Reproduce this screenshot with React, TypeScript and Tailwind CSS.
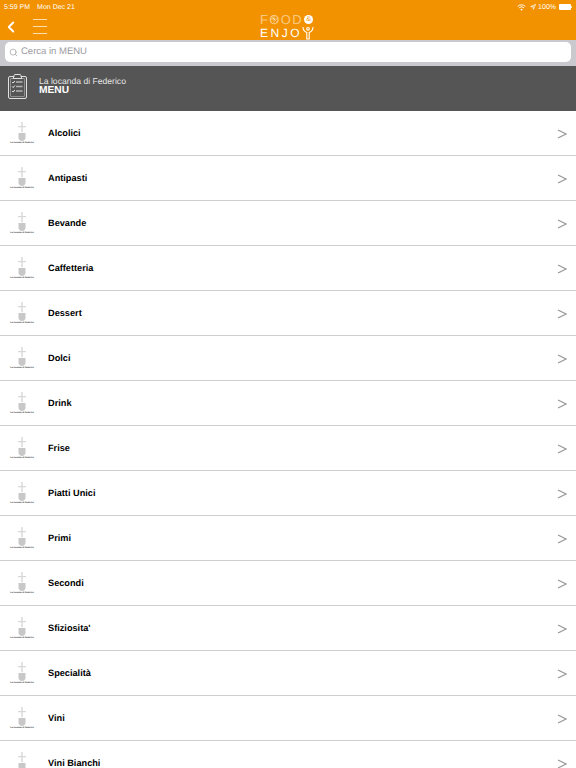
import { ChevronLeft, Search } from 'lucide-react';

const categories = [
  'Alcolici',
  'Antipasti',
  'Bevande',
  'Caffetteria',
  'Dessert',
  'Dolci',
  'Drink',
  'Frise',
  'Piatti Unici',
  'Primi',
  'Secondi',
  "Sfiziosita'",
  'Specialità',
  'Vini',
  'Vini Bianchi',
];

function StatusBar() {
  return (
    <div className="flex h-[12px] items-center justify-between pl-1 pr-[4px] pt-[2px] text-[7px] leading-none text-white">
      <div className="flex gap-[7px]">
        <span>5:59 PM</span>
        <span>Mon Dec 21</span>
      </div>
      <div className="flex items-center">
        <svg width="9" height="7" viewBox="0 0 10 8" fill="none" stroke="white">
          <path d="M.7 2.700a6.200 6.200 0 0 1 8.600 0" strokeWidth="1.100" />
          <path d="M2.300 4.400a3.900 3.900 0 0 1 5.400 0" strokeWidth="1.100" />
          <path d="M5 7.800 3.600 6a2 2 0 0 1 2.800 0Z" fill="white" stroke="none" />
        </svg>
        <svg width="6" height="6" viewBox="0 0 8 8" fill="none" stroke="white" className="ml-[4px]">
          <path d="M7.400.6.900 3.600h3.500v3.500Z" />
        </svg>
        <span className="ml-[2px]">100%</span>
        <div className="ml-[3px] h-[6px] w-[12px] rounded-[1px] bg-white" />
        <div className="h-[2px] w-px bg-white/70" />
      </div>
    </div>
  );
}

function Logo() {
  return (
    <div className="flex w-[56px] flex-col items-start leading-none">
      <div className="relative flex h-[12px] items-center text-[13px] leading-none tracking-[1.400px] text-white/50">
        <span>FOOD</span>
        <span className="ml-[1px] flex h-[9px] w-[9px] items-center justify-center rounded-full bg-white text-[7px] tracking-normal text-[#f39200]">
          &amp;
        </span>
        {/* plate slices inside the first O */}
        <svg width="8" height="8" viewBox="0 0 8 8" fill="none" stroke="white" strokeOpacity=".6" strokeWidth=".8" className="absolute left-[10px] top-[2px]">
          <path d="M4 .5v7M.5 4h7M1.500 1.500l5 5" />
        </svg>
      </div>
      <div className="mt-[1px] flex h-[13px] items-center text-[12px] leading-none tracking-[2.500px] text-white">
        <span>ENJO</span>
        <svg width="12" height="14" viewBox="0 0 12 14" fill="none" stroke="white" strokeWidth="1.100">
          <path d="M1 1c0 3.500 2.500 5 3.800 5.500v6.500h2.400V6.500C8.500 6 11 4.500 11 1" />
          <circle cx="6" cy="2.800" r="1.300" />
        </svg>
      </div>
    </div>
  );
}

function TopBar() {
  return (
    <div className="relative h-10 bg-[#f39200]">
      <StatusBar />
      <div className="flex h-[28px] items-center">
        <ChevronLeft className="ml-[2px] mt-[1px] h-[18px] w-[18px] text-white" strokeWidth={2.500} />
        <div className="ml-[13px] flex w-[14px] flex-col gap-[6px]">
          <div className="h-px bg-white/70" />
          <div className="h-px bg-white/70" />
          <div className="h-px bg-white/70" />
        </div>
      </div>
      <div className="absolute left-[260px] top-[13px]">
        <Logo />
      </div>
    </div>
  );
}

function SearchBar() {
  return (
    <div className="h-[26px] bg-[#c9c9ce] px-[5px] pt-[2px]">
      <div className="flex h-[20px] items-center rounded-[5px] bg-white pl-[4px] text-[9.500px] text-[#9a9a9e]">
        <Search className="h-[9px] w-[9px]" strokeWidth={1.800} />
        <span className="ml-[3px] pt-[1px]">Cerca in MENU</span>
      </div>
    </div>
  );
}

function ClipboardIcon() {
  return (
    <svg width="19" height="25" viewBox="0 0 19 25" fill="none" stroke="#e0e0e0" strokeWidth="1">
      <rect x=".5" y="2.500" width="18" height="22" rx="1.500" />
      <rect x="2.500" y="4.500" width="14" height="18" rx=".5" strokeWidth=".6" strokeOpacity=".7" />
      <path d="M6 2.500V1.500C6 1 6.500.5 7 .5h5c.5 0 1 .5 1 1v1l1 2H5Z" fill="#555555" />
      <path d="M4.200 8l1 1 1.600-2M4.200 12.500l1 1 1.600-2M4.200 17l1 1 1.600-2" stroke="#ffffff" strokeWidth=".9" />
      <path d="M8 8h6.500M8 12.500h6.500M8 17h6.500" strokeWidth="1.300" stroke="#b4b4b4" />
    </svg>
  );
}

function SectionHeader() {
  return (
    <div className="flex h-[45px] items-start bg-[#555555] pl-2 pt-[8px]">
      <ClipboardIcon />
      <div className="ml-[12px] pt-[2px] text-white">
        <div className="text-[8.600px] leading-[10px] text-[#e4e4e4]">La locanda di Federico</div>
        <div className="text-[10.200px] font-bold leading-[10px]">MENU</div>
      </div>
    </div>
  );
}

function RestaurantLogo() {
  return (
    <div className="flex w-[24px] flex-col items-center">
      <svg width="8" height="19" viewBox="0 0 8 19">
        <path d="M3.300 0h1.400v4H8v1.200H4.700v5h-1.400v-5H0V4h3.300Z" fill="#d8d8d8" />
        <path d="M.5 11h7v5c0 1.500-1.500 3-3.500 3s-3.500-1.500-3.500-3Z" fill="#c8c8c8" />
      </svg>
      <div className="mt-[1px] whitespace-nowrap text-[2.200px] font-bold leading-[3px] text-[#333333]">
        La locanda di Federico
      </div>
    </div>
  );
}

function CategoryRow({ name }: { name: string }) {
  return (
    <div className="flex h-[45px] shrink-0 items-center border-b border-[#cfcfcf] pl-[10px] pr-[9px]">
      <RestaurantLogo />
      <span className="ml-[14px] flex-1 pt-[2px] text-[9.200px] font-bold text-black">{name}</span>
      <svg width="10" height="10" viewBox="0 0 10 10" fill="none" stroke="#9a9a9a" strokeWidth="1.200" className="mt-[2px]">
        <path d="M1 1l8 4-8 4" />
      </svg>
    </div>
  );
}

export default function App() {
  return (
    <div className="flex h-[768px] w-[576px] flex-col overflow-hidden bg-white font-['Liberation_Sans',Arial,sans-serif] [text-rendering:geometricPrecision]">
      <TopBar />
      <SearchBar />
      <SectionHeader />
      <div className="flex min-h-0 flex-1 flex-col overflow-hidden">
        {categories.map((name) => (
          <CategoryRow key={name} name={name} />
        ))}
      </div>
    </div>
  );
}
